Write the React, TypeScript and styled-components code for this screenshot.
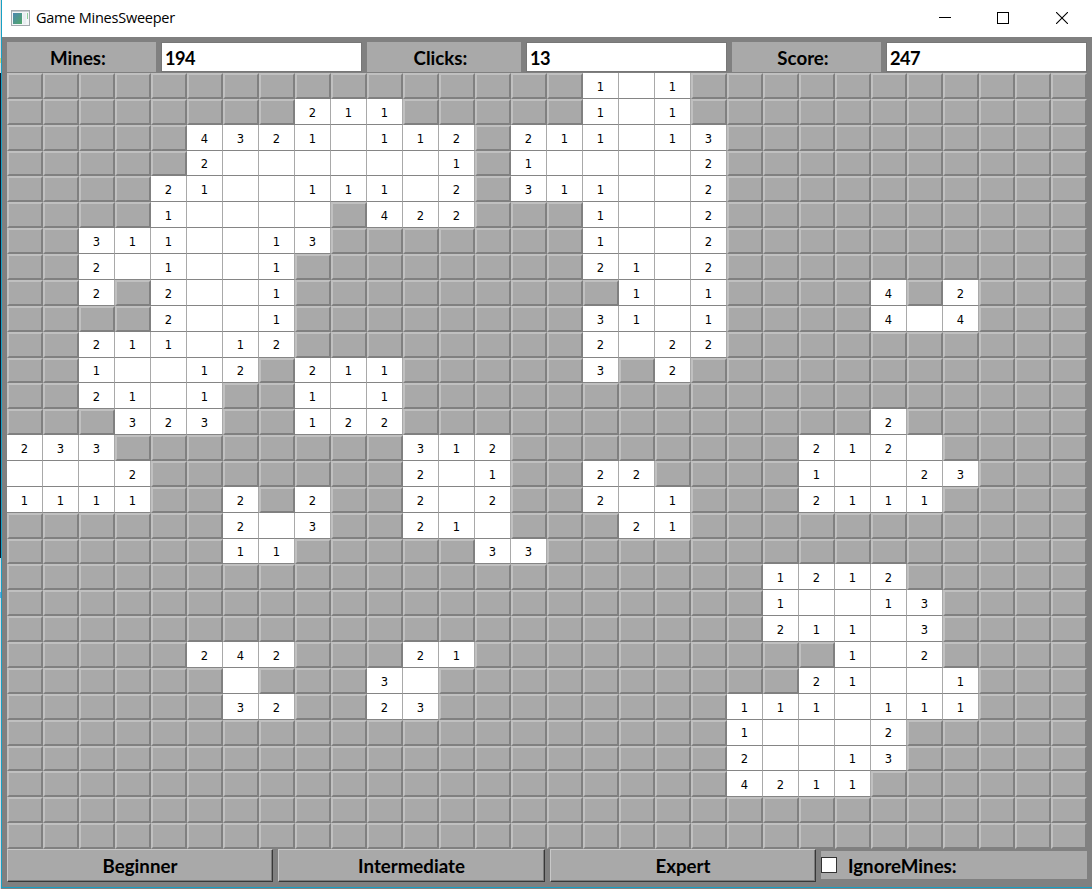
import React from "react";
import styled, { createGlobalStyle, css } from "styled-components";

const GlobalStyle = createGlobalStyle`
  html, body { margin: 0; padding: 0; }
  body { background: #808080; overflow: hidden; }
  *, *::before, *::after { box-sizing: border-box; }
`;

const BOARD = [
  "################1.1###########",
  "########211#####1.1###########",
  "#####4321.112#211.13##########",
  "#####2......1#1....2##########",
  "####21..111.2#311..2##########",
  "####1....#422###1..2##########",
  "##311..13#######1..2##########",
  "##2.1..1########21.2##########",
  "##2#2..1#########1.1####4#2###",
  "####2..1########31.1####4.4###",
  "##211.12########2.22##########",
  "##1..12#211#####3#2###########",
  "##21.1##1.1###################",
  "###323##122#############2#####",
  "233########312########212.####",
  "...2#######2.1##22####1..23###",
  "1111##2#2##2.2##2.1###2111####",
  "######2.3##21.###21###########",
  "######11#####33###############",
  "#####################1212#####",
  "#####################1..13####",
  "#####################211.3####",
  "#####242###21##########1.2####",
  "######.###3.##########21..1###",
  "######32##23########111.111###",
  "####################1...2#####",
  "####################2..13#####",
  "####################4211######",
  "##############################",
  "##############################",
];

const Screen = styled.div`
  display: flex;
  width: 1092px;
  height: 889px;
  background: #808080;
`;

const DesktopEdge = styled.div`
  flex: none;
  width: 1px;
  background: linear-gradient(
    #dcdcdc 0 58px, #d8d070 58px 63px, #dcdcdc 63px 73px,
    #101828 73px 558px, #d4dade 558px 592px, #58a8e0 592px 598px, #d4dade 598px
  );
`;

const AppWindow = styled.div`
  display: flex;
  flex: 1;
  flex-direction: column;
  height: 888px;
  border-left: 1px solid #18a0c4;
  border-bottom: 1px solid #18a0c4;
  background: #808080;
`;

const TitleBar = styled.header`
  display: flex;
  flex: none;
  align-items: center;
  height: 37px;
  padding: 0 1px 2px 9px;
  background: #fff;
`;

const Title = styled.h1`
  flex: 1;
  margin: 0 0 0 6px;
  padding-top: 1px;
  color: #000;
  font: 400 14.5px/20px "Open Sans", "Noto Sans", sans-serif;
  letter-spacing: -0.24px;
`;

const CaptionButton = styled.button`
  display: flex;
  align-items: center;
  justify-content: center;
  width: 58.5px;
  height: 35px;
  padding: 0;
  border: 0;
  background: transparent;
`;

const boldText = css`
  color: #000;
  font: 700 18.7px/24px Lato, "Open Sans", sans-serif;
`;

const StatusBar = styled.section`
  display: grid;
  flex: none;
  grid-template-columns: 149px 201px 154px 201px 149px 201px;
  column-gap: 5px;
  height: 31px;
  margin: 5px 5px 0;
`;

const StatusLabel = styled.div`
  ${boldText}
  display: flex;
  align-items: center;
  justify-content: center;
  height: 30px;
  padding: 2px 7px 0 0;
  background: #a9a9a9;
`;

const StatusField = styled.output`
  ${boldText}
  display: flex;
  align-items: center;
  height: 30px;
  padding: 2px 0 0 3px;
  border: 1px solid #777;
  background: #fff;
  font-size: 18.2px;
  letter-spacing: -0.6px;
`;

const Board = styled.main`
  display: grid;
  flex: none;
  grid-template-columns: repeat(30, 36px);
  grid-template-rows: repeat(30, 1fr);
  width: 1080px;
  height: 776px;
  margin-left: 5px;
`;

const Cell = styled.div<{ $open: boolean }>`
  display: flex;
  align-items: center;
  justify-content: center;
  min-height: 0;
  color: #000;
  font: 11.5px/14px "DejaVu Sans", sans-serif;
  ${({ $open }) =>
    $open
      ? css`
          padding-top: 2.74px;
          border-right: 1px solid #a9a9a9;
          border-bottom: 1px solid #858585;
          background: #fff;
        `
      : css`
          border: 2px solid;
          border-color: #c0c0c0 #808080 #808080 #c0c0c0;
          background: #a9a9a9;
        `}
`;

const BottomBar = styled.footer`
  display: grid;
  grid-template-columns: 266px 267px 266px 266px;
  column-gap: 5px;
  height: 33px;
  margin-left: 5px;
`;

const LevelButton = styled.button`
  ${boldText}
  padding: 1px 0 0;
  border: 1px solid;
  border-color: #c8c8c8 #383838 #383838 #c8c8c8;
  background: #a9a9a9;
  box-shadow: inset -1px -1px #7c7c7c;
`;

const IgnoreOption = styled.label`
  ${boldText}
  display: flex;
  align-items: center;
  height: 28px;
  margin-top: 2px;
  background: #a9a9a9;
`;

const OptionText = styled.span`
  padding-top: 2px;
`;

const CheckBox = styled.input`
  flex: none;
  width: 16px;
  height: 16px;
  margin: 0 11px 0 0;
  border: 1px solid #333;
  background: #fff;
  appearance: none;
`;

function WindowIcon() {
  return (
    <svg width="19" height="16" viewBox="0 0 19 16" shapeRendering="crispEdges">
      <defs>
        <linearGradient id="pane" x1="0" y1="0" x2="1" y2="1">
          <stop offset="0" stopColor="#4b86b0" />
          <stop offset="1" stopColor="#52a868" />
        </linearGradient>
      </defs>
      <rect x="0.5" y="0.5" width="18" height="15" fill="#f4f6f8" stroke="#a4a9ae" />
      <rect x="1" y="1" width="17" height="1" fill="#c8ccd0" />
      <rect x="2" y="3" width="9" height="11" fill="url(#pane)" />
      <rect x="12" y="3" width="3" height="11" fill="#e8edf0" />
      <rect x="16" y="3" width="1" height="6" fill="#8fcf9a" />
    </svg>
  );
}

const LEVELS = ["Beginner", "Intermediate", "Expert"];

const STATUS = [
  { label: "Mines:", value: "194" },
  { label: "Clicks:", value: "13" },
  { label: "Score:", value: "247" },
];

export default function App() {
  return (
    <>
      <GlobalStyle />
      <Screen>
        <DesktopEdge />
        <AppWindow>
          <TitleBar>
            <WindowIcon />
            <Title>Game MinesSweeper</Title>
            <CaptionButton aria-label="Minimize">
              <svg width="12" height="12" shapeRendering="crispEdges">
                <path d="M0 5.5h12" stroke="#000" />
              </svg>
            </CaptionButton>
            <CaptionButton aria-label="Maximize">
              <svg width="12" height="12" shapeRendering="crispEdges">
                <path d="M.5 .5h11v11H.5z" fill="none" stroke="#000" />
              </svg>
            </CaptionButton>
            <CaptionButton aria-label="Close">
              <svg width="12" height="12">
                <path d="M0 0 12 12M12 0 0 12" stroke="#000" strokeWidth="1.1" />
              </svg>
            </CaptionButton>
          </TitleBar>
          <StatusBar>
            {STATUS.map(({ label, value }) => (
              <React.Fragment key={label}>
                <StatusLabel>{label}</StatusLabel>
                <StatusField>{value}</StatusField>
              </React.Fragment>
            ))}
          </StatusBar>
          <Board>
            {BOARD.flatMap((row, y) =>
              [...row].map((mark, x) => (
                <Cell key={`${y}-${x}`} $open={mark !== "#"}>
                  {mark === "#" || mark === "." ? null : mark}
                </Cell>
              ))
            )}
          </Board>
          <BottomBar>
            {LEVELS.map((level) => (
              <LevelButton key={level}>{level}</LevelButton>
            ))}
            <IgnoreOption>
              <CheckBox type="checkbox" />
              <OptionText>IgnoreMines:</OptionText>
            </IgnoreOption>
          </BottomBar>
        </AppWindow>
      </Screen>
    </>
  );
}
